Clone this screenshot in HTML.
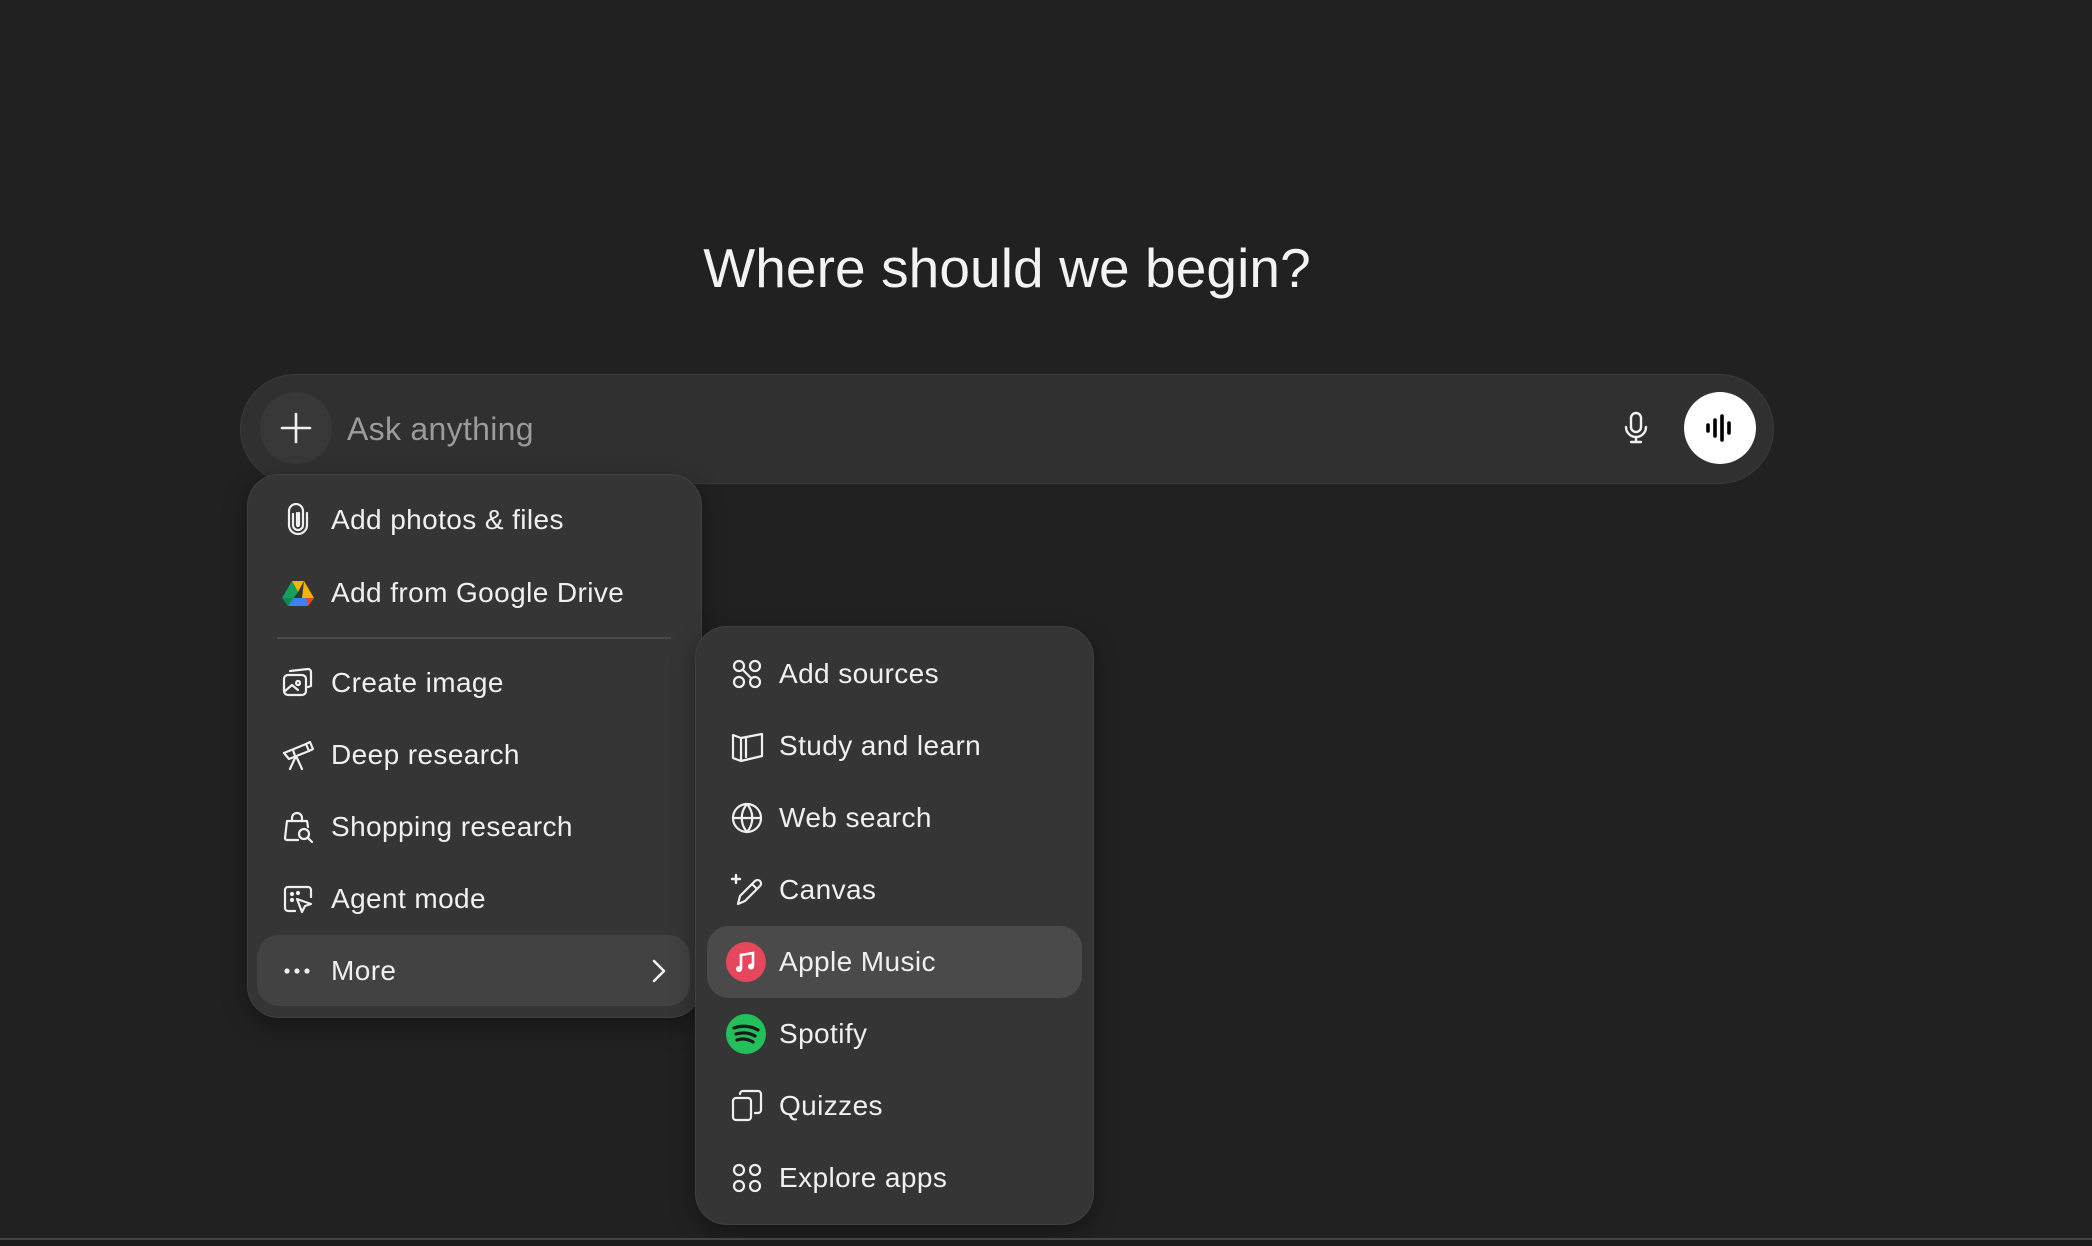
<!DOCTYPE html>
<html><head><meta charset="utf-8"><style>
*{margin:0;padding:0;box-sizing:border-box}
body{width:2092px;height:1246px;background:#212121;font-family:"Liberation Sans",sans-serif;color:#ececec;position:relative;overflow:hidden}
.abs{position:absolute}
h1{position:absolute;left:0;width:2014px;text-align:center;top:236px;font-weight:400;font-size:55px;color:#f3f3f3;letter-spacing:0.1px}
.bar{left:240px;top:374px;width:1534px;height:110px;border-radius:55px;background:#303030;border:1px solid #3a3a3a}
.menu{background:#353535;border:1px solid #404040;border-radius:32px;box-shadow:0 8px 24px rgba(0,0,0,.35)}
.item{position:absolute;height:72px;display:flex;align-items:center;font-size:28px;color:#f0f0f0;letter-spacing:0.4px}
.item svg{position:absolute;left:0}
.ic{stroke:#f0f0f0;fill:none;stroke-width:2.2;stroke-linecap:round;stroke-linejoin:round}
</style></head><body>
<h1>Where should we begin?</h1>
<div class="abs bar"></div>
<div class="abs" style="left:260px;top:392px;width:72px;height:72px;border-radius:50%;background:#383838"></div>
<svg class="abs" style="left:278px;top:410px" width="36" height="36" viewBox="0 0 36 36"><path d="M18 4v28M4 18h28" stroke="#f0f0f0" stroke-width="2.6" stroke-linecap="round"/></svg>
<div class="abs" style="left:347px;top:411px;font-size:32px;color:#9b9b9b;letter-spacing:0.3px">Ask anything</div>
<svg class="abs" style="left:1620px;top:410px" width="32" height="36" viewBox="0 0 32 36"><rect x="11" y="3" width="10" height="19" rx="5" fill="none" stroke="#f0f0f0" stroke-width="2.4"/><path d="M6 17a10 10 0 0 0 20 0M16 27v5M11 32h10" fill="none" stroke="#f0f0f0" stroke-width="2.4" stroke-linecap="round"/></svg>
<div class="abs" style="left:1684px;top:392px;width:72px;height:72px;border-radius:50%;background:#fff"></div>
<svg class="abs" style="left:1700px;top:408px" width="40" height="40" viewBox="0 0 40 40"><path d="M8 17v6M15 12v16M22 8v24M29 15v10" stroke="#000" stroke-width="3.6" stroke-linecap="round"/></svg>

<div class="abs menu" style="left:247px;top:474px;width:455px;height:544px"></div>
<div class="abs" style="left:257px;top:935px;width:433px;height:71px;border-radius:22px;background:#424242"></div>
<div class="abs" style="left:277px;top:637px;width:394px;height:2px;background:#4a4a4a"></div>

<div class="item" style="left:281px;top:484px;padding-left:50px;width:400px"><svg width="34" height="34" viewBox="0 0 34 34" class="ic"><path d="M12 11v11a5 5 0 0 0 10 0V8a7 7 0 0 0-14 0v14a9 9 0 0 0 18 0V10M16 10v12a1 1 0 0 0 2 0V10"/></svg>Add photos &amp; files</div>
<div class="item" style="left:281px;top:557px;padding-left:50px;width:400px"><svg width="34" height="34" viewBox="0 0 34 34"><path d="M11 5h12l-6 11-6-11z" fill="#f5b400"/><path d="M11 5L1 22l6 8 10-14z" fill="#12a05c"/><path d="M23 5l10 17H21z" fill="#f5b400"/><path d="M7 30h20l6-8H13z" fill="#3b82f6"/><path d="M27 30l6-8h-8z" fill="#ea4335"/><path d="M1 22l6 8 4-8z" fill="#0f8a4f"/></svg>Add from Google Drive</div>
<div class="item" style="left:281px;top:647px;padding-left:50px;width:400px"><svg width="34" height="34" viewBox="0 0 34 34" class="ic"><rect x="3" y="9" width="22" height="20" rx="4"/><path d="M9 5l18-2a3 3 0 0 1 3 3v14l-3 1M4 25l7-6 6 5M17 15a2 2 0 1 0 0.1 0"/></svg>Create image</div>
<div class="item" style="left:281px;top:719px;padding-left:50px;width:400px"><svg width="34" height="34" viewBox="0 0 34 34" class="ic"><path d="M3 15l22-9 3 7-20 8zM25 6l4-2 3 7-4 2M14 20l-5 11M16 20l5 11M12 12l2 6"/></svg>Deep research</div>
<div class="item" style="left:281px;top:791px;padding-left:50px;width:400px"><svg width="34" height="34" viewBox="0 0 34 34" class="ic"><path d="M17 30H6a2 2 0 0 1-2-2l2-17h20l1 6M11 11V8a5 5 0 0 1 10 0v3"/><circle cx="23" cy="24" r="5"/><path d="M27 28l4 4"/></svg>Shopping research</div>
<div class="item" style="left:281px;top:863px;padding-left:50px;width:400px"><svg width="34" height="34" viewBox="0 0 34 34" class="ic"><path d="M14 29H7a3 3 0 0 1-3-3V8a3 3 0 0 1 3-3h20a3 3 0 0 1 3 3v7M16 17l14 5-6 2-3 6z"/><circle cx="11" cy="12" r="1" fill="#f0f0f0"/><circle cx="17" cy="11" r="1" fill="#f0f0f0"/><circle cx="11" cy="18" r="1" fill="#f0f0f0"/></svg>Agent mode</div>
<div class="item" style="left:281px;top:935px;padding-left:50px;width:400px"><svg width="34" height="34" viewBox="0 0 34 34"><circle cx="6" cy="17" r="2.6" fill="#f0f0f0"/><circle cx="16" cy="17" r="2.6" fill="#f0f0f0"/><circle cx="26" cy="17" r="2.6" fill="#f0f0f0"/></svg>More</div>
<svg class="abs" style="left:648px;top:958px" width="22" height="26" viewBox="0 0 22 26"><path d="M6 3l10 10-10 10" fill="none" stroke="#f0f0f0" stroke-width="2.6" stroke-linecap="round" stroke-linejoin="round"/></svg>

<div class="abs menu" style="left:695px;top:626px;width:399px;height:599px"></div>
<div class="abs" style="left:707px;top:926px;width:375px;height:72px;border-radius:22px;background:#4a4a4a"></div>

<div class="item" style="left:730px;top:638px;padding-left:49px;width:340px"><svg width="34" height="34" viewBox="0 0 34 34" class="ic"><circle cx="9" cy="9" r="5"/><circle cx="25" cy="9" r="5"/><circle cx="9" cy="25" r="5"/><circle cx="25" cy="25" r="5"/><path d="M13 13l8 8"/></svg>Add sources</div>
<div class="item" style="left:730px;top:710px;padding-left:49px;width:340px"><svg width="34" height="34" viewBox="0 0 34 34" class="ic"><path d="M3 6v23l8 3V9zM11 9l21-4v22l-21 5M16 8v20"/></svg>Study and learn</div>
<div class="item" style="left:730px;top:782px;padding-left:49px;width:340px"><svg width="34" height="34" viewBox="0 0 34 34" class="ic"><circle cx="17" cy="17" r="14"/><path d="M3 17h28M17 3c-7 8-7 20 0 28M17 3c7 8 7 20 0 28"/></svg>Web search</div>
<div class="item" style="left:730px;top:854px;padding-left:49px;width:340px"><svg width="34" height="34" viewBox="0 0 34 34" class="ic"><path d="M8 31l2-8 15-15a3 3 0 0 1 5 5L15 28zM22 11l4 4"/><path d="M6 2v8M2 6h8" stroke-width="2.4"/></svg>Canvas</div>
<div class="item" style="left:726px;top:926px;padding-left:53px;width:340px"><svg width="40" height="40" viewBox="0 0 40 40" style="left:0"><circle cx="20" cy="20" r="20" fill="#e5485c"/><path d="M15 27V13l12-2v13" fill="none" stroke="#fff" stroke-width="2.6"/><circle cx="13" cy="27" r="3" fill="#fff"/><circle cx="25" cy="24.5" r="3" fill="#fff"/></svg>Apple Music</div>
<div class="item" style="left:726px;top:998px;padding-left:53px;width:340px"><svg width="40" height="40" viewBox="0 0 40 40" style="left:0"><circle cx="20" cy="20" r="20" fill="#1ed760" opacity=".85"/><path d="M8 14c8-3 17-2 24 2M10 20c7-2 14-1 19 2M11 26c6-2 11-1 16 2" fill="none" stroke="#1a1a1a" stroke-width="3.2" stroke-linecap="round"/></svg>Spotify</div>
<div class="item" style="left:730px;top:1070px;padding-left:49px;width:340px"><svg width="34" height="34" viewBox="0 0 34 34" class="ic"><rect x="3" y="9" width="18" height="22" rx="3"/><path d="M10 5a3 3 0 0 1 3-3h15a3 3 0 0 1 3 3v16a3 3 0 0 1-3 3h-3"/></svg>Quizzes</div>
<div class="item" style="left:730px;top:1142px;padding-left:49px;width:340px"><svg width="34" height="34" viewBox="0 0 34 34" class="ic"><circle cx="9" cy="9" r="5"/><circle cx="25" cy="9" r="5"/><circle cx="9" cy="25" r="5"/><circle cx="25" cy="25" r="5"/></svg>Explore apps</div>

<div class="abs" style="left:0;top:1238px;width:2092px;height:2px;background:#444"></div>
<div class="abs" style="left:0;top:1240px;width:2092px;height:6px;background:#1c1c1c"></div>
</body></html>
